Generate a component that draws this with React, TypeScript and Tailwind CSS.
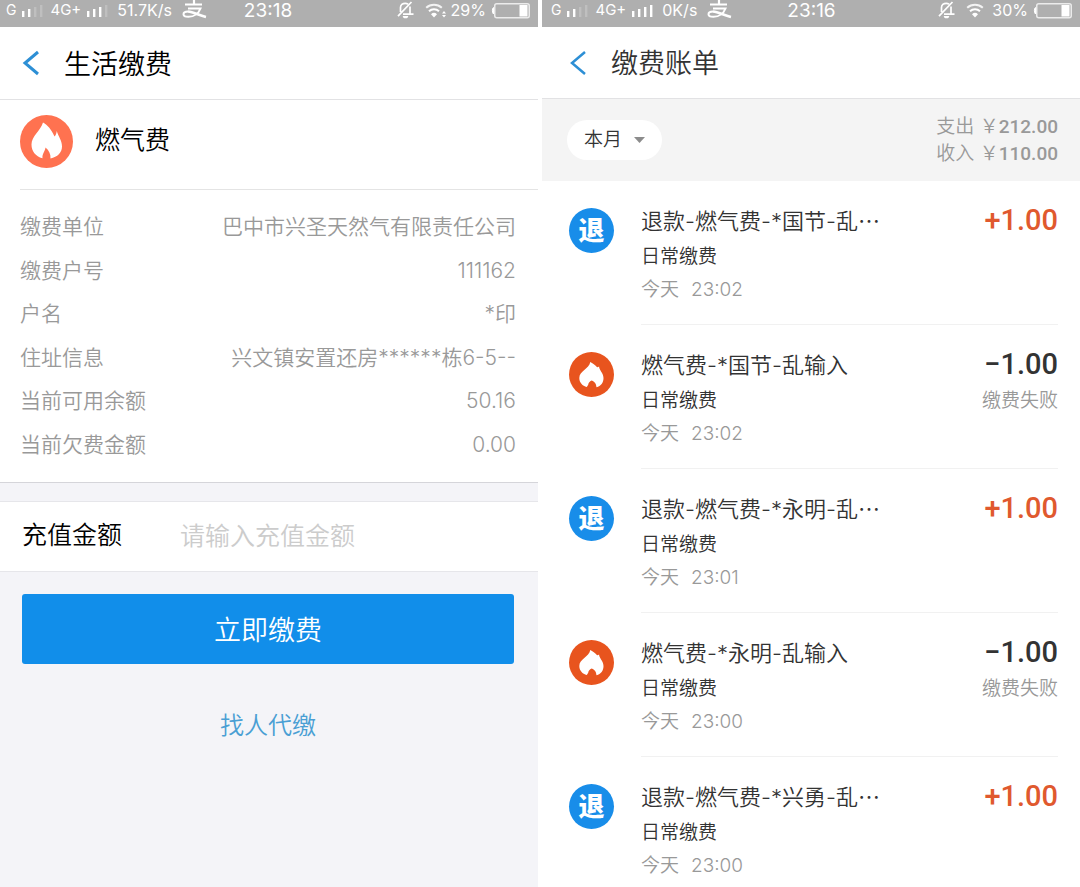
import React from "react";

const cjk = "font-['Inter','Noto_Sans_CJK_SC',sans-serif]";

function SignalBars({ lit }: { lit: number }) {
  return (
    <svg className="h-4 w-[22px] shrink-0" viewBox="0 0 22 16" aria-hidden="true">
      {[0, 1, 2, 3].map((i) => (
        <rect key={i} x={1 + i * 6} y={9 - i * 2} width="2.4" height={6 + i * 2} fill="#fff" opacity={i < lit ? 1 : 0.2} />
      ))}
    </svg>
  );
}

function AlipayMark() {
  return (
    <svg className="ml-1 h-[20px] w-[26px] shrink-0" viewBox="0 0 26 20" fill="none" stroke="#fff" aria-hidden="true">
      <path d="M4 4.500h17M13 0v5" strokeWidth="2.200" />
      <path d="M7 8.500h12.500c-2 5-6.500 8.300-12 8.300-3 0-5-1-5-2.600 0-1.700 2-2.700 4.500-2.700" strokeWidth="2" />
      <path d="M7 11.500c5.500.5 10 3.500 18 5.500" strokeWidth="2.600" />
    </svg>
  );
}

function MutedBell() {
  return (
    <svg className="h-[18px] w-[17px] shrink-0" viewBox="0 0 17 18" fill="none" stroke="#fff" strokeWidth="1.700" aria-hidden="true">
      <path d="M3.500 11V6.500C3.500 4 5.500 2.300 8.300 2.300c1 0 2 .3 2.800.8M13 5.500v7.700M6 13.200h10.500M1 15.200L14.500 1" />
      <path d="M5.800 15h5.400a2.700 2.300 0 0 1-5.400 0z" fill="#fff" stroke="none" />
    </svg>
  );
}

function Wifi({ activity }: { activity: boolean }) {
  return (
    <svg className="h-4 w-[21px] shrink-0" viewBox="0 0 21 16" fill="none" stroke="#fff" strokeWidth="2" aria-hidden="true">
      <path d="M1.200 5.700a11.500 11.500 0 0 1 15.600 0" strokeOpacity=".85" />
      <path d="M4 9.200a7.400 7.400 0 0 1 10 0" />
      <path d="M9 15.500l-3-3.200a4.300 4.300 0 0 1 6 0z" fill="#fff" stroke="none" />
      {activity && <path d="M17 11.500l2-2.500 2 2.500zM17 13l2 2.500 2-2.500z" fill="#fff" stroke="none" />}
    </svg>
  );
}

function Battery() {
  return (
    <svg className="h-[17px] w-[39px] shrink-0" viewBox="0 0 39 17" aria-hidden="true">
      <rect x="3.750" y="1.750" width="34.500" height="14" rx="2" fill="none" stroke="#fff" strokeOpacity="0.750" strokeWidth="1.500" />
      <path d="M2.500 5.500C1 6 1 11 2.500 12z" fill="#fff" stroke="#fff" />
      <rect x="28.500" y="3" width="8" height="11.500" fill="#fff" />
    </svg>
  );
}

type StatusProps = { bars: number; speed: string; time: string; battery: string; activity: boolean; inset: string };

function StatusBar({ bars, speed, time, battery, activity, inset }: StatusProps) {
  return (
    <div className={`grid h-[27px] shrink-0 grid-cols-[1fr_auto_1fr] items-start bg-[#afafaf] pr-2 text-white ${inset}`}>
      <div className="flex h-5 items-center gap-[5px] text-base leading-5 whitespace-nowrap">
        <span className="text-sm">G</span>
        <SignalBars lit={2} />
        <span className="ml-[2px] text-[15px]">4G+</span>
        <SignalBars lit={bars} />
        <span className="ml-1">{speed}</span>
        <AlipayMark />
      </div>
      <span className="text-[19px] leading-[22px]">{time}</span>
      <div className="flex h-5 items-center justify-end gap-[5px] text-base leading-5">
        <MutedBell />
        <span className="ml-[6px] flex">
          <Wifi activity={activity} />
        </span>
        <span>{battery}</span>
        <Battery />
      </div>
    </div>
  );
}

type HeaderProps = { title: string; box: string; color: string; stroke: string };

function Header({ title, box, color, stroke }: HeaderProps) {
  return (
    <header className={`flex shrink-0 items-center gap-6 border-b border-[#e2e2e4] bg-white ${box}`}>
      <button type="button" aria-label="返回">
        <svg className="h-[26px] w-[18px]" viewBox="0 0 18 26" fill="none" stroke="#2d8fd5" strokeWidth={stroke} aria-hidden="true">
          <path d="M16 2L3 13l13 11" />
        </svg>
      </button>
      <h1 className={`pt-[3px] text-[27px] leading-9 font-[350] ${color}`}>{title}</h1>
    </header>
  );
}

function GasBadge() {
  return (
    <svg className="size-[53px] shrink-0" viewBox="0 0 53 53" aria-hidden="true">
      <circle cx="26.500" cy="26.500" r="26.500" fill="#ff7250" />
      <path d="M23 7.500c4.500 2.500 8.500 7 11.500 14 1.300-1.200 2-2.800 2.200-5.500 1.500 5 5.300 9.500 5.300 15.500 0 6-4.500 10.500-11.500 12 .3-4.500-1.500-8-5-11-.5 4-3.500 6.500-3 10.800C15.500 41.500 11.500 36 11.500 29.500 11.500 21 20.500 16 23 7.500z" fill="#fff" />
    </svg>
  );
}

function GasBillBadge() {
  return (
    <svg className="mt-[27px] size-[45px] shrink-0" viewBox="0 0 45 45" aria-hidden="true">
      <circle cx="22.500" cy="22.500" r="22.500" fill="#e8541e" />
      <path d="M21.300 10c3 1.500 5 3.200 6.800 5.200.8-.1 1.500-.4 2-.8-.2 3.600 4.400 6.300 4.400 11.600 0 4.700-2.500 8-7 9.200-.3-1.200-.4-2-.5-2.500-1-2.500-2.500-3.500-4.500-4.200-1.800.9-3 2.200-3.300 4.200l-1.400 2.300C13.500 34 10.300 30.500 10.300 26c0-7 9.700-9 11-16z" fill="#fff" />
    </svg>
  );
}

const details = [
  ["缴费单位", "巴中市兴圣天然气有限责任公司"],
  ["缴费户号", "111162"],
  ["户名", "*印"],
  ["住址信息", "兴文镇安置还房******栋6-5--"],
  ["当前可用余额", "50.16"],
  ["当前欠费金额", "0.00"],
];

function PaymentScreen() {
  return (
    <section className="flex flex-col bg-[#f4f4f8]">
      <StatusBar bars={3} speed="51.7K/s" time="23:18" battery="29%" activity inset="pl-[6px]" />
      <Header title="生活缴费" box="h-[73px] pl-[22px]" color="text-black" stroke="3" />
      <div className="border-b border-[#d5d5da] bg-white pl-5">
        <div className="flex h-[90px] items-center gap-[22px] border-b border-[#e4e4e4] pb-[6px]">
          <GasBadge />
          <h2 className="pb-[3px] text-[25px] leading-9 font-[350] text-black">燃气费</h2>
        </div>
        <dl className="flex min-h-[292px] flex-col justify-between py-[22px] pr-[22px] text-[21px] leading-[30px] font-[350] text-[#999]">
          {details.map(([label, value]) => (
            <div key={label} className="flex justify-between">
              <dt>{label}</dt>
              <dd>{value}</dd>
            </div>
          ))}
        </dl>
      </div>
      <form onSubmit={(e) => e.preventDefault()}>
        <div className="mt-[18px] flex h-[71px] items-center border-y border-[#e6e6ea] bg-white pl-[22px]">
          <label htmlFor="amount" className="w-[158px] shrink-0 pb-[2px] text-[25px] font-[350] text-black">
            充值金额
          </label>
          <input id="amount" className="min-w-0 flex-1 bg-transparent text-[25px] font-[350] outline-none placeholder:text-[#ccc]" placeholder="请输入充值金额" />
        </div>
        <div className="flex flex-col items-center gap-11 pt-[22px] pr-6 pl-[22px]">
          <button type="submit" className="h-[70px] w-full rounded-[3px] bg-[#118eea] pt-1 text-[27px] font-[350] text-white">
            立即缴费
          </button>
          <a href="#proxy" className="text-2xl leading-9 font-[350] text-[#4a9fd4]">
            找人代缴
          </a>
        </div>
      </form>
    </section>
  );
}

type Bill = { refund: boolean; title: string; time: string };

const bills: Bill[] = [
  { refund: true, title: "退款-燃气费-*国节-乱⋯", time: "23:02" },
  { refund: false, title: "燃气费-*国节-乱输入", time: "23:02" },
  { refund: true, title: "退款-燃气费-*永明-乱⋯", time: "23:01" },
  { refund: false, title: "燃气费-*永明-乱输入", time: "23:00" },
  { refund: true, title: "退款-燃气费-*兴勇-乱⋯", time: "23:00" },
];

function BillRow({ bill }: { bill: Bill }) {
  return (
    <li className="flex h-36 gap-[27px] pr-[22px] pl-[27px]">
      {bill.refund ? (
        <span className="mt-[27px] flex size-[45px] shrink-0 items-center justify-center rounded-full bg-[#188de9] text-[26px] leading-none font-black text-white">
          退
        </span>
      ) : (
        <GasBillBadge />
      )}
      <div className="flex min-w-0 flex-1 justify-between border-b border-[#f1f1f1] pt-[22px]">
        <div>
          <h2 className="text-[22px] leading-9 font-[350] whitespace-nowrap text-[#333]">{bill.title}</h2>
          <p className="text-[19px] leading-9 font-[350] text-[#333]">日常缴费</p>
          <p className="flex gap-3 text-[19px] leading-[30px] font-[350] text-[#999]">
            <span>今天</span>
            <span>{bill.time}</span>
          </p>
        </div>
        <div className="text-right">
          <p className={`font-['Roboto',sans-serif] text-[29px] leading-[34px] font-medium ${bill.refund ? "text-[#e0592e]" : "text-[#333]"}`}>
            {bill.refund ? "+1.00" : "−1.00"}
          </p>
          {!bill.refund && <p className="text-[19px] leading-10 font-[350] text-[#999]">缴费失败</p>}
        </div>
      </div>
    </li>
  );
}

function BillsScreen() {
  return (
    <section className="flex flex-col overflow-hidden bg-white">
      <StatusBar bars={4} speed="0K/s" time="23:16" battery="30%" activity={false} inset="pl-[9px]" />
      <Header title="缴费账单" box="h-[72px] pl-[27px]" color="text-[#333]" stroke="2.5" />
      <div className="flex h-[82px] shrink-0 items-center justify-between bg-[#f4f4f4] pr-[22px] pl-[25px]">
        <button type="button" className="flex h-10 items-center gap-3 rounded-full bg-white px-[17px] text-[19px] font-[350] text-[#333]">
          本月
          <svg className="h-[6px] w-[11px]" viewBox="0 0 11 6" aria-hidden="true">
            <path d="M0 0h11L5.500 6z" fill="#8c8c8c" />
          </svg>
        </button>
        <div className="text-right text-[19px] leading-[27px] font-[350] text-[#999]">
          <p>
            支出 ￥<span className="font-['Roboto',sans-serif] font-medium">212.00</span>
          </p>
          <p>
            收入 ￥<span className="font-['Roboto',sans-serif] font-medium">110.00</span>
          </p>
        </div>
      </div>
      <ul className="shrink-0">
        {bills.map((bill, i) => (
          <BillRow key={i} bill={bill} />
        ))}
      </ul>
    </section>
  );
}

export default function App() {
  return (
    <main lang="zh-CN" className={`grid h-screen grid-cols-2 gap-1 overflow-hidden bg-white ${cjk}`}>
      <PaymentScreen />
      <BillsScreen />
    </main>
  );
}
